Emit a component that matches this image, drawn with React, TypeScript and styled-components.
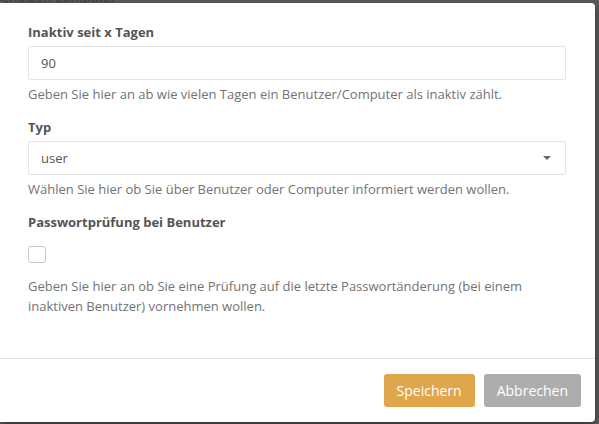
import React, { useState } from 'react';
import styled, { createGlobalStyle } from 'styled-components';

const GlobalStyle = createGlobalStyle`
  html, body {
    margin: 0;
    padding: 0;
    background: #5c5c5c;
  }
  body {
    font-family: "Open Sans", "Liberation Sans", Arial, sans-serif;
    font-size: 13px;
    color: #555;
  }
`;

const Backdrop = styled.div`
  width: 599px;
  height: 424px;
  overflow: hidden;
  background: #5c5c5c;
  display: flex;
  flex-direction: column;
`;

const BehindStrip = styled.div`
  height: 3px;
  overflow: hidden;
  flex-shrink: 0;
`;

const BehindText = styled.div`
  margin-top: -12px;
  margin-left: -6px;
  font-size: 13px;
  line-height: 18px;
  color: #3e3e3e;
  white-space: nowrap;
`;

const ModalRow = styled.div`
  display: flex;
  flex: 1;
  padding: 0 4px 2px 0;
`;

const Modal = styled.div`
  flex: 1;
  background: #fff;
  border-radius: 0 4px 4px 0;
  box-shadow: 0 3px 9px rgba(0, 0, 0, 0.5);
  display: flex;
  flex-direction: column;
`;

const Body = styled.div`
  padding: 20px 29px 27px 28px;
`;

const FormGroup = styled.div`
  margin-bottom: 15px;
`;

const Label = styled.label`
  display: block;
  font-weight: 700;
  font-size: 13px;
  line-height: 18.5px;
  color: #555;
  margin-bottom: 4px;
`;

const TextInput = styled.input`
  display: block;
  box-sizing: border-box;
  width: 100%;
  height: 34px;
  padding: 6px 12px;
  border: 1px solid #e5e5e5;
  border-radius: 2px;
  font-family: inherit;
  font-size: 13px;
  color: #555;
  outline: none;
`;

const SelectBox = styled.div`
  box-sizing: border-box;
  height: 34px;
  padding: 0 12px;
  border: 1px solid #e5e5e5;
  border-radius: 2px;
  display: flex;
  align-items: center;
  justify-content: space-between;
  font-size: 13px;
  color: #555;
`;

const Caret = styled.span`
  width: 0;
  height: 0;
  margin-right: 2px;
  border-left: 4px solid transparent;
  border-right: 4px solid transparent;
  border-top: 4px solid #666;
`;

const Help = styled.p<{ $lh?: number }>`
  margin: 5px 0 0;
  font-size: 13px;
  line-height: ${(p) => p.$lh ?? 18.5}px;
  color: #737373;
`;

const Check = styled.span<{ $on: boolean }>`
  display: block;
  box-sizing: border-box;
  width: 18px;
  height: 17px;
  margin: 14px 0 13px;
  border: 1px solid ${(p) => (p.$on ? '#e0a64b' : '#c8c8c8')};
  border-radius: 3px;
  background: ${(p) => (p.$on ? '#e0a64b' : '#fff')};
  cursor: pointer;
`;

const Footer = styled.div`
  border-top: 1px solid #e5e5e5;
  padding: 15px 14px 15px 15px;
  display: flex;
  justify-content: flex-end;
  gap: 9px;
`;

const Button = styled.button<{ $variant: 'primary' | 'default' }>`
  height: 33px;
  padding: 0 12px;
  border: 1px solid transparent;
  border-radius: 3px;
  font-family: inherit;
  font-size: 14px;
  color: #fff;
  background: ${(p) => (p.$variant === 'primary' ? '#e0a64b' : '#adadad')};
  cursor: pointer;
`;

export default function App() {
  const [days, setDays] = useState('90');
  const [checked, setChecked] = useState(false);

  return (
    <>
      <GlobalStyle />
      <Backdrop>
        <BehindStrip>
          <BehindText>benutzen Computer</BehindText>
        </BehindStrip>
        <ModalRow>
          <Modal>
            <Body>
              <FormGroup>
                <Label>Inaktiv seit x Tagen</Label>
                <TextInput value={days} onChange={(e) => setDays(e.target.value)} />
                <Help>Geben Sie hier an ab wie vielen Tagen ein Benutzer/Computer als inaktiv zählt.</Help>
              </FormGroup>
              <FormGroup>
                <Label>Typ</Label>
                <SelectBox>
                  <span>user</span>
                  <Caret />
                </SelectBox>
                <Help>Wählen Sie hier ob Sie über Benutzer oder Computer informiert werden wollen.</Help>
              </FormGroup>
              <FormGroup>
                <Label>Passwortprüfung bei Benutzer</Label>
                <Check $on={checked} onClick={() => setChecked(!checked)} />
                <Help $lh={20}>
                  Geben Sie hier an ob Sie eine Prüfung auf die letzte Passwortänderung (bei einem
                  inaktiven Benutzer) vornehmen wollen.
                </Help>
              </FormGroup>
            </Body>
            <Footer>
              <Button $variant="primary">Speichern</Button>
              <Button $variant="default">Abbrechen</Button>
            </Footer>
          </Modal>
        </ModalRow>
      </Backdrop>
    </>
  );
}
